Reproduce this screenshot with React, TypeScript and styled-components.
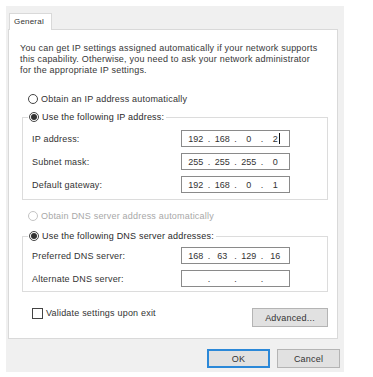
import React from "react";
import styled, { createGlobalStyle } from "styled-components";

const GlobalStyle = createGlobalStyle`
  html, body {
    margin: 0;
    padding: 0;
    background: #ffffff;
  }
  body {
    font-family: "Liberation Sans", Arial, sans-serif;
    font-size: 9px;
    letter-spacing: 0.2px;
    color: #2a2a2a;
  }
`;

const Dialog = styled.div`
  margin: 6px 0 0 6px;
  width: 338px;
  height: 366px;
  box-sizing: border-box;
  padding: 7px 0 4px 2px;
  background: #f0f0f0;
  display: flex;
  flex-direction: column;
`;

const TabStrip = styled.div`
  display: flex;
  margin-left: 1px;
`;

const Tab = styled.div`
  position: relative;
  z-index: 1;
  height: 17px;
  width: 43px;
  box-sizing: border-box;
  margin-bottom: -1px;
  padding: 3px 0 0 4px;
  background: #ffffff;
  border: 1px solid #d9d9d9;
  border-bottom: none;
  font-size: 8px;
  letter-spacing: 0.2px;
  color: #333;
`;

const Panel = styled.div`
  width: 330px;
  height: 310px;
  box-sizing: border-box;
  background: #ffffff;
  border: 1px solid #d9d9d9;
  padding: 13px 9px 0 13px;
  display: flex;
  flex-direction: column;
`;

const Intro = styled.p`
  margin: 0 0 0 -2px;
  line-height: 11px;
  color: #383838;
`;

const OptionRow = styled.label<{ $disabled?: boolean; $top: number }>`
  display: flex;
  align-items: center;
  gap: 3px;
  height: 12px;
  margin-top: ${(p) => p.$top}px;
  padding-left: 6px;
  color: ${(p) => (p.$disabled ? "#a8a8a8" : "#333")};
`;

const Radio = styled.span<{ $checked?: boolean; $disabled?: boolean }>`
  flex: none;
  width: 10px;
  height: 10px;
  box-sizing: border-box;
  border-radius: 50%;
  border: 1px solid ${(p) => (p.$disabled ? "#c4c4c4" : "#444")};
  background: #fff;
  display: flex;
  align-items: center;
  justify-content: center;

  &::after {
    content: "";
    display: ${(p) => (p.$checked ? "block" : "none")};
    width: 6px;
    height: 6px;
    border-radius: 50%;
    background: #333;
  }
`;

const Group = styled.div<{ $top: number; $bottom: number }>`
  margin-top: ${(p) => p.$top}px;
  border: 1px solid #dcdcdc;
  padding: 0 37px ${(p) => p.$bottom}px 9px;
`;

const Legend = styled.label`
  display: flex;
  align-items: center;
  gap: 3px;
  width: fit-content;
  height: 12px;
  margin: -7px 0 0 -4px;
  padding: 0 2px 0 1px;
  background: #fff;
  color: #2a2a2a;
`;

const FieldGrid = styled.div<{ $top: number }>`
  display: grid;
  grid-template-columns: 1fr 109px;
  row-gap: 6px;
  align-items: center;
  margin-top: ${(p) => p.$top}px;
`;

const FieldLabel = styled.span`
  color: #333;
`;

const IpBox = styled.div`
  height: 17px;
  box-sizing: border-box;
  border: 1px solid #8a8a8a;
  padding: 0 3px;
  display: flex;
  align-items: center;
  letter-spacing: 0;
  color: #333;
`;

const Octet = styled.span`
  width: 22px;
  text-align: center;
  position: relative;
`;

const Dot = styled.span`
  width: 5px;
  text-align: center;
`;

const Caret = styled.span`
  position: absolute;
  top: -1px;
  margin-left: 1px;
  width: 1px;
  height: 11px;
  background: #111;
`;

const BottomRow = styled.div`
  display: flex;
  justify-content: space-between;
  align-items: flex-start;
  margin-top: 15px;
`;

const CheckRow = styled.label`
  display: flex;
  align-items: center;
  gap: 3px;
  height: 12px;
  margin-left: 10px;
  color: #333;
`;

const CheckBox = styled.span`
  flex: none;
  width: 11px;
  height: 11px;
  box-sizing: border-box;
  border: 1px solid #444;
  background: #fff;
`;

const Button = styled.button<{ $primary?: boolean; $width: number }>`
  width: ${(p) => p.$width}px;
  height: 19px;
  box-sizing: border-box;
  margin-top: 1px;
  padding: 0;
  font: inherit;
  letter-spacing: inherit;
  color: #333;
  background: #e1e1e1;
  border: ${(p) => (p.$primary ? "2px solid #2b88d8" : "1px solid #b4b4b4")};
`;

const Footer = styled.div`
  display: flex;
  justify-content: flex-end;
  gap: 7px;
  padding: 9px 4px 0 0;
`;

const IpField = ({ value, caret }: { value: string[]; caret?: boolean }) => (
  <IpBox>
    {value.map((part, i) => (
      <React.Fragment key={i}>
        {i > 0 && <Dot>.</Dot>}
        <Octet>
          {part}
          {caret && i === value.length - 1 && <Caret />}
        </Octet>
      </React.Fragment>
    ))}
  </IpBox>
);

export default function App() {
  return (
    <>
      <GlobalStyle />
      <Dialog>
        <TabStrip>
          <Tab>General</Tab>
        </TabStrip>
        <Panel>
          <Intro>
            You can get IP settings assigned automatically if your network supports
            <br />
            this capability. Otherwise, you need to ask your network administrator
            <br />
            for the appropriate IP settings.
          </Intro>

          <OptionRow $top={17}>
            <Radio />
            Obtain an IP address automatically
          </OptionRow>

          <Group $top={12} $bottom={6}>
            <Legend>
              <Radio $checked />
              Use the following IP address:
            </Legend>
            <FieldGrid $top={7}>
              <FieldLabel>IP address:</FieldLabel>
              <IpField value={["192", "168", "0", "2"]} caret />
              <FieldLabel>Subnet mask:</FieldLabel>
              <IpField value={["255", "255", "255", "0"]} />
              <FieldLabel>Default gateway:</FieldLabel>
              <IpField value={["192", "168", "0", "1"]} />
            </FieldGrid>
          </Group>

          <OptionRow $top={10} $disabled>
            <Radio $disabled />
            Obtain DNS server address automatically
          </OptionRow>

          <Group $top={14} $bottom={4}>
            <Legend>
              <Radio $checked />
              Use the following DNS server addresses:
            </Legend>
            <FieldGrid $top={5}>
              <FieldLabel>Preferred DNS server:</FieldLabel>
              <IpField value={["168", "63", "129", "16"]} />
              <FieldLabel>Alternate DNS server:</FieldLabel>
              <IpField value={["", "", "", ""]} />
            </FieldGrid>
          </Group>

          <BottomRow>
            <CheckRow>
              <CheckBox />
              Validate settings upon exit
            </CheckRow>
            <Button $width={76}>Advanced...</Button>
          </BottomRow>
        </Panel>
        <Footer>
          <Button $primary $width={63}>
            OK
          </Button>
          <Button $width={63}>Cancel</Button>
        </Footer>
      </Dialog>
    </>
  );
}
